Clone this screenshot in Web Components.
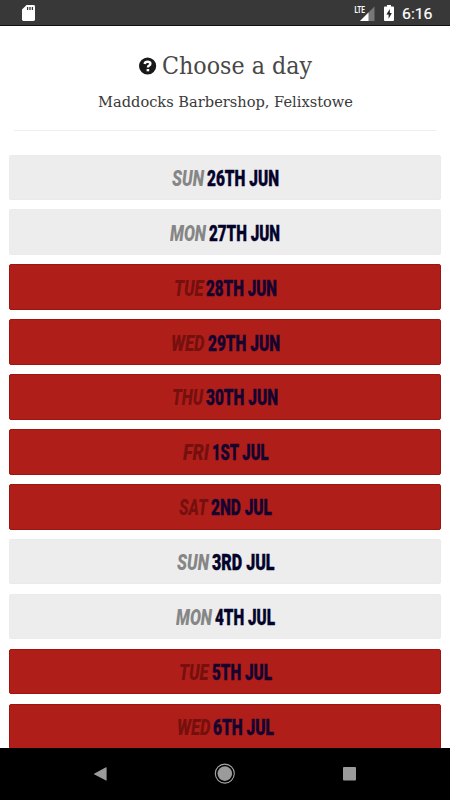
<!DOCTYPE html>
<html lang="en">
<head>
<meta charset="utf-8">
<meta name="viewport" content="width=device-width, initial-scale=1">
<title>Choose a day</title>
<style>
  body {
    margin: 0;
    height: 100vh;
    overflow: hidden;
    background: #fff;
    font-family: Roboto, "Liberation Sans", sans-serif;
  }
</style>
</head>
<body>
<booking-app></booking-app>

<script>
const make = (html) => {
  const template = document.createElement("template");
  template.innerHTML = html;
  return template;
};

// text squeezed or stretched horizontally to the given width
const fitTemplate = make(/*html*/ `
  <style>
    :host {
      display: block;
      white-space: nowrap;
    }
    span {
      display: inline-block;
      transform-origin: 0 50%;
    }
  </style>
  <span><slot></slot></span>
`);

class FitText extends HTMLElement {
  constructor() {
    super();
    this.attachShadow({ mode: "open" });
    this.shadowRoot.appendChild(fitTemplate.content.cloneNode(true));
  }

  connectedCallback() {
    const span = this.shadowRoot.querySelector("span");
    const width = parseFloat(this.getAttribute("width"));
    const natural = span.getBoundingClientRect().width;
    this.style.width = width + "px";
    if (natural) span.style.transform = `scaleX(${width / natural})`;
  }
}
customElements.define("fit-text", FitText);

const statusTemplate = make(/*html*/ `
  <style>
    :host {
      display: flex;
      box-sizing: border-box;
      height: 26px;
      flex: none;
      align-items: center;
      background: #383838;
      border-bottom: 1px solid #101010;
      color: #fff;
      padding: 1px 17.5px 0 21px;
    }
    svg { display: block; }
    .spacer { flex: 1; }
    .signal { margin-right: 9px; }
    .battery { margin-right: 8px; }
    .time { font-size: 15.5px; line-height: 20px; margin-top: 2px; -webkit-text-stroke: 0.2px #fff; }
  </style>
  <svg width="15" height="18" viewBox="0 0 15 18">
    <path d="M5.6 1H12.6Q14 1 14 2.400V15.600Q14 17 12.600 17H2.400Q1 17 1 15.600V5.600Z" fill="#fff"/>
    <path d="M6.600 3V6M9 3V6M11.400 3V6" stroke="#383838" stroke-width="1.300"/>
  </svg>
  <div class="spacer"></div>
  <svg class="signal" width="21" height="18" viewBox="0 0 21 18">
    <path d="M20.500 2.500V17H6Z" fill="#777"/>
    <path d="M14.500 8.500V17H6Z" fill="#fff"/>
    <text x="0.500" y="8.600" font-size="9.500" font-weight="700" textLength="10.500" lengthAdjust="spacingAndGlyphs" fill="#fff" stroke="#383838" stroke-width="0.500" paint-order="stroke">LTE</text>
  </svg>
  <svg class="battery" width="10" height="18" viewBox="0 0 10 18">
    <path d="M3 1H7V2.500H9Q10 2.500 10 3.500V16Q10 17 9 17H1Q0 17 0 16V3.500Q0 2.500 1 2.500H3Z" fill="#fff"/>
    <path d="M5.800 5L2.400 10.500H4.600V14.800L7.800 9H5.800Z" fill="#222"/>
  </svg>
  <fit-text class="time" width="30.500">6:16</fit-text>
`);

class StatusBar extends HTMLElement {
  constructor() {
    super();
    this.attachShadow({ mode: "open" });
    this.shadowRoot.appendChild(statusTemplate.content.cloneNode(true));
  }
}
customElements.define("status-bar", StatusBar);

const headingTemplate = make(/*html*/ `
  <style>
    :host {
      display: block;
      margin: 0 14px;
      height: 104px;
      border-bottom: 1px solid #eee;
      font-family: "DejaVu Serif", serif;
    }
    .title {
      display: flex;
      justify-content: center;
      align-items: center;
      height: 34px;
      padding-top: 23px;
      gap: 5px;
      color: #484848;
      font-size: 24.500px;
      line-height: 34px;
    }
    .shop {
      display: flex;
      justify-content: center;
      margin-top: 8px;
      color: #3a3a3a;
      font-size: 15.500px;
      line-height: 22px;
    }
    svg { display: block; }
  </style>
  <div class="title">
    <svg width="18" height="18" viewBox="0 0 18 18">
      <circle cx="8.600" cy="9" r="8.600" fill="#191919"/>
      <path d="M5.600 7Q6 4.700 8.600 4.700Q11.400 4.700 11.400 6.800Q11.400 8 10 8.600Q8.900 9.200 8.900 10.500" fill="none" stroke="#fff" stroke-width="2.400"/>
      <rect x="7.600" y="12" width="2.600" height="2.300" fill="#fff"/>
    </svg>
    <fit-text width="150"><slot name="title"></slot></fit-text>
  </div>
  <div class="shop"><fit-text width="255"><slot name="shop"></slot></fit-text></div>
`);

class PageHeading extends HTMLElement {
  constructor() {
    super();
    this.attachShadow({ mode: "open" });
    this.shadowRoot.appendChild(headingTemplate.content.cloneNode(true));
  }
}
customElements.define("page-heading", PageHeading);

const dayTemplate = make(/*html*/ `
  <style>
    :host {
      display: flex;
      box-sizing: border-box;
      flex: none;
      height: 45.600px;
      padding: 3px 0 0 1px;
      justify-content: center;
      align-items: center;
      gap: 3px;
      border: 1px solid #ebebeb;
      border-radius: 2px;
      background: #ededed;
      font-size: 22px;
      line-height: 26px;
      font-weight: 900;
    }
    :host([full]) {
      background: #b01e1a;
      border-color: #9d1411;
    }
    .day { color: #868686; font-style: italic; }
    :host([full]) .day { color: #75100e; }
    .date { color: #03032b; -webkit-text-stroke: 0.4px currentColor; }
    :host([full]) .date { color: #14032f; }
  </style>
  <fit-text class="day"></fit-text>
  <fit-text class="date"></fit-text>
`);

class DayButton extends HTMLElement {
  constructor() {
    super();
    this.attachShadow({ mode: "open" });
    this.shadowRoot.appendChild(dayTemplate.content.cloneNode(true));
  }

  // runs before the two fit-text children are connected and measured
  connectedCallback() {
    this.fill(".day", this.getAttribute("day"), this.getAttribute("day-width"));
    this.fill(".date", this.getAttribute("date"), this.getAttribute("date-width"));
  }

  fill(selector, text, width) {
    const el = this.shadowRoot.querySelector(selector);
    el.textContent = text;
    el.setAttribute("width", width);
  }
}
customElements.define("day-button", DayButton);

const navTemplate = make(/*html*/ `
  <style>
    :host {
      display: grid;
      flex: none;
      grid-template-columns: 124.500px 124.500px 124.500px;
      justify-content: center;
      justify-items: center;
      align-items: center;
      height: 52px;
      background: #000;
    }
    svg { display: block; }
  </style>
  <svg width="22" height="22" viewBox="0 0 22 22"><path d="M4 10.800L16 4.200Q16.600 4 16.600 4.700V17.300Q16.600 18 16 17.600L4 11.200Z" fill="#9b9b9b"/></svg>
  <svg width="22" height="22" viewBox="0 0 22 22">
    <circle cx="10.800" cy="10.600" r="9.500" fill="none" stroke="#a6a6a6" stroke-width="1.100"/>
    <circle cx="10.800" cy="10.600" r="7.300" fill="#9b9b9b"/>
  </svg>
  <svg width="22" height="22" viewBox="0 0 22 22"><rect x="4" y="4" width="13" height="13.500" rx="1" fill="#9b9b9b"/></svg>
`);

class NavBar extends HTMLElement {
  constructor() {
    super();
    this.attachShadow({ mode: "open" });
    this.shadowRoot.appendChild(navTemplate.content.cloneNode(true));
  }
}
customElements.define("nav-bar", NavBar);

// day, date, full, width of day, width of date
const days = [
  ["SUN", "26TH JUN", false, 32, 72],
  ["MON", "27TH JUN", false, 36, 71],
  ["TUE", "28TH JUN", true, 29.5, 71],
  ["WED", "29TH JUN", true, 33.5, 72],
  ["THU", "30TH JUN", true, 31, 72],
  ["FRI", "1ST JUL", true, 26, 56.5],
  ["SAT", "2ND JUL", true, 28.5, 61],
  ["SUN", "3RD JUL", false, 32, 62.5],
  ["MON", "4TH JUL", false, 36, 60],
  ["TUE", "5TH JUL", true, 29.5, 60],
  ["WED", "6TH JUL", true, 33.5, 61],
];

const appTemplate = make(/*html*/ `
  <style>
    :host {
      display: flex;
      flex-direction: column;
      height: 100vh;
    }
    main {
      flex: 1;
      min-height: 0;
      overflow: hidden;
    }
    .days {
      display: flex;
      flex-direction: column;
      gap: 9.300px;
      margin: 23.600px 9.500px 0 9.300px;
    }
  </style>
  <status-bar></status-bar>
  <main>
    <page-heading>
      <span slot="title">Choose a day</span>
      <span slot="shop">Maddocks Barbershop, Felixstowe</span>
    </page-heading>
    <div class="days"></div>
  </main>
  <nav-bar></nav-bar>
`);

class BookingApp extends HTMLElement {
  constructor() {
    super();
    this.attachShadow({ mode: "open" });
    this.shadowRoot.appendChild(appTemplate.content.cloneNode(true));

    const list = this.shadowRoot.querySelector(".days");
    days.forEach(([day, date, full, dayWidth, dateWidth]) => {
      const button = document.createElement("day-button");
      button.setAttribute("day", day);
      button.setAttribute("date", date);
      button.setAttribute("day-width", dayWidth);
      button.setAttribute("date-width", dateWidth);
      button.toggleAttribute("full", full);
      list.appendChild(button);
    });
  }
}
customElements.define("booking-app", BookingApp);
</script>
</body>
</html>
